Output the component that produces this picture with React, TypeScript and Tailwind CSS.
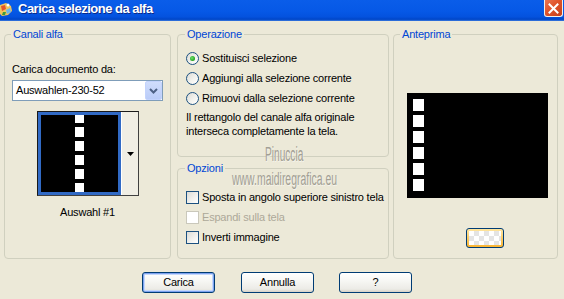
import React from "react";

function Radio({ checked }: { checked?: boolean }) {
  return (
    <span className="flex h-[13px] w-[13px] shrink-0 items-center justify-center rounded-full border border-[#1C5180] bg-[linear-gradient(135deg,#DCDBD5_0%,#F4F4F0_60%,#FFFFFF_100%)]">
      {checked && (
        <span className="h-[5px] w-[5px] rounded-full bg-[radial-gradient(circle_at_40%_40%,#6EE26A_0%,#21A121_70%,#1A8A1A_100%)]" />
      )}
    </span>
  );
}

function Check({ disabled }: { disabled?: boolean }) {
  return (
    <span
      className={
        disabled
          ? "h-[13px] w-[13px] shrink-0 border border-[#CAC8BB] bg-white"
          : "h-[13px] w-[13px] shrink-0 border border-[#1C5180] bg-[linear-gradient(135deg,#DCDCD7_0%,#F2F2EF_60%,#FFFFFF_100%)]"
      }
    />
  );
}

function XPButton({ label, isDefault }: { label: string; isDefault?: boolean }) {
  return (
    <div
      className={
        "flex h-[21px] w-[73px] items-center justify-center rounded-[3px] border border-[#003C74] bg-[linear-gradient(to_bottom,#FFFFFF_0%,#F7F7F4_40%,#ECEBE6_85%,#D6D0C5_100%)] text-black " +
        (isDefault ? "shadow-[inset_0_0_0_1px_#7DA2F0,inset_0_0_0_2px_#C5D8FB]" : "")
      }
    >
      {label}
    </div>
  );
}

export default function App() {
  return (
    <div className="relative h-[299px] w-[564px] overflow-hidden bg-[#ECE9D8] font-['Liberation_Sans',Arial,sans-serif] text-[11px] tracking-[-0.2px] text-black">
      {/* Title bar */}
      <div className="flex h-[21px] items-start bg-[linear-gradient(to_bottom,#0A5DE9_0%,#0658E6_55%,#0452DE_80%,#0046C8_92%,#3C7BE0_100%)]">
        <svg width="14" height="17" viewBox="0 0 14 17" className="mt-[1px] shrink-0">
          <path d="M0 4 L6 2 L11 5 L12 10 L8 14 L2 15 L0 13 Z" fill="#F2C45A" />
          <path d="M1 5 L5 4 L6 8 L2 10 Z" fill="#E5562A" />
          <path d="M6 9 L10 7 L11 11 L7 13 Z" fill="#6BB7F0" />
          <path d="M3 11 L6 11 L5 14 L2 14 Z" fill="#3E9B3E" />
          <circle cx="8" cy="4" r="1.5" fill="#FFFFFF" />
        </svg>
        <span className="ml-[4px] mt-[1px] text-[13px] font-bold leading-[15px] tracking-[-0.5px] text-white [text-shadow:1px_1px_0_#0A2A8A]">
          Carica selezione da alfa
        </span>
        <div className="ml-auto mr-[1px] flex h-[17px] w-[19px] items-center justify-center rounded-b-[3px] border-x border-b border-[#F0F0F0] bg-[linear-gradient(135deg,#E97553_0%,#E0532A_45%,#C5401C_100%)]">
          <svg width="11" height="11" viewBox="0 0 11 11" className="mt-[1px]">
            <path d="M1.5 1.5 L9.5 9.5 M9.5 1.5 L1.5 9.5" stroke="#FFFFFF" strokeWidth="2" strokeLinecap="square" />
          </svg>
        </div>
      </div>

      {/* Groups row */}
      <div className="flex pt-[7px]">
        {/* Canali alfa */}
        <fieldset className="ml-[4px] h-[231px] w-[167px] min-w-0 rounded-[4px] border border-[#D0D0BF]">
          <legend className="ml-[6px] px-[2px] leading-[13px] text-[#0046D5]">Canali alfa</legend>
          <div className="ml-[7px] mt-[22px] leading-[13px]">Carica documento da:</div>
          <div className="ml-[7px] mt-[4px] flex h-[21px] w-[151px] items-center border border-[#7F9DB9] bg-white">
            <span className="flex-1 pl-[3px]">Auswahlen-230-52</span>
            <span className="flex h-[19px] w-[17px] items-center justify-center rounded-[2px] border border-[#C3D3FD] bg-[linear-gradient(to_bottom,#D0DDFC_0%,#BACCF8_100%)]">
              <svg width="9" height="6" viewBox="0 0 9 6">
                <path d="M1 1 L4.5 4.5 L8 1" stroke="#4D6185" strokeWidth="2" fill="none" />
              </svg>
            </span>
          </div>
          <div className="ml-[32px] mt-[10px] flex h-[85px] w-[102px] border border-[#1A1A1A] border-b-[#404040] border-r-[#404040]">
            <div className="h-full w-[83px] border-[3px] border-[#316AC5] bg-black">
              <div className="flex h-full flex-col items-center gap-[4px] overflow-hidden">
                <div className="-mt-[2px] h-[10px] w-[9px] shrink-0 bg-white" />
                <div className="h-[10px] w-[9px] shrink-0 bg-white" />
                <div className="h-[10px] w-[9px] shrink-0 bg-white" />
                <div className="h-[10px] w-[9px] shrink-0 bg-white" />
                <div className="h-[10px] w-[9px] shrink-0 bg-white" />
                <div className="h-[10px] w-[9px] shrink-0 bg-white" />
              </div>
            </div>
            <div className="flex flex-1 items-center justify-center border-l border-white bg-[#F0EEE4]">
              <svg width="7" height="4" viewBox="0 0 7 4">
                <path d="M0 0 L7 0 L3.5 4 Z" fill="#000000" />
              </svg>
            </div>
          </div>
          <div className="mt-[10px] text-center leading-[13px]">Auswahl #1</div>
        </fieldset>

        {/* Middle column */}
        <div className="ml-[6px] flex w-[212px] flex-col">
          <fieldset className="h-[129px] min-w-0 rounded-[4px] border border-[#D0D0BF]">
            <legend className="ml-[7px] px-[2px] leading-[13px] text-[#0046D5]">Operazione</legend>
            <div className="mt-[7px] flex flex-col pl-[8px]">
              <div className="flex h-[20px] items-center gap-[3px]">
                <Radio checked />
                <span>Sostituisci selezione</span>
              </div>
              <div className="flex h-[20px] items-center gap-[3px]">
                <Radio />
                <span>Aggiungi alla selezione corrente</span>
              </div>
              <div className="flex h-[20px] items-center gap-[3px]">
                <Radio />
                <span>Rimuovi dalla selezione corrente</span>
              </div>
            </div>
            <div className="mt-[2px] pl-[8px] leading-[14px]">
              Il rettangolo del canale alfa originale
              <br />
              interseca completamente la tela.
            </div>
          </fieldset>
          <fieldset className="mt-[5px] h-[97px] min-w-0 rounded-[4px] border border-[#D0D0BF]">
            <legend className="ml-[7px] px-[2px] leading-[13px] text-[#0046D5]">Opzioni</legend>
            <div className="mt-[12px] flex flex-col pl-[8px]">
              <div className="flex h-[20px] items-center gap-[3px]">
                <Check />
                <span>Sposta in angolo superiore sinistro tela</span>
              </div>
              <div className="flex h-[20px] items-center gap-[3px]">
                <Check disabled />
                <span className="text-[#ACA899]">Espandi sulla tela</span>
              </div>
              <div className="flex h-[20px] items-center gap-[3px]">
                <Check />
                <span>Inverti immagine</span>
              </div>
            </div>
          </fieldset>
        </div>

        {/* Anteprima */}
        <fieldset className="ml-[4px] h-[231px] w-[165px] min-w-0 rounded-[4px] border border-[#D0D0BF]">
          <legend className="ml-[6px] px-[2px] leading-[13px] text-[#0046D5]">Anteprima</legend>
          <div className="ml-[13px] mt-[52px] flex h-[105px] w-[141px] flex-col gap-[4px] bg-black pl-[6px] pt-[6px]">
            <div className="h-[12px] w-[11px] bg-white" />
            <div className="h-[12px] w-[11px] bg-white" />
            <div className="h-[12px] w-[11px] bg-white" />
            <div className="h-[12px] w-[11px] bg-white" />
            <div className="h-[12px] w-[11px] bg-white" />
            <div className="h-[12px] w-[11px] bg-white" />
          </div>
          <div className="ml-[72px] mt-[30px] h-[20px] w-[38px] rounded-[3px] border border-[#003C74] bg-[linear-gradient(to_bottom,#FFE7A2,#F8B330)] p-[2px]">
            <div className="h-full w-full bg-[conic-gradient(#E4E4E4_25%,#FFFFFF_0_50%,#E4E4E4_0_75%,#FFFFFF_0)] bg-[length:10px_10px]" />
          </div>
        </fieldset>
      </div>

      {/* Bottom buttons */}
      <div className="ml-[142px] mt-[13px] flex">
        <XPButton label="Carica" isDefault />
        <div className="ml-[26px]">
          <XPButton label="Annulla" />
        </div>
        <div className="ml-[25px]">
          <XPButton label="?" />
        </div>
      </div>

      {/* Watermark overlay */}
      <div className="pointer-events-none absolute left-[265px] top-[145px] origin-left scale-x-[0.52] whitespace-nowrap text-[19.5px] font-normal leading-none tracking-normal text-[#A29F94] [text-shadow:1px_1px_0_#F6F4EC]">
        Pinuccia
      </div>
      <div className="pointer-events-none absolute left-[232px] top-[170px] origin-left scale-x-[0.58] whitespace-nowrap text-[18px] font-normal leading-none tracking-normal text-[#A29F94] [text-shadow:1px_1px_0_#F6F4EC]">
        www.maidiregrafica.eu
      </div>
    </div>
  );
}
